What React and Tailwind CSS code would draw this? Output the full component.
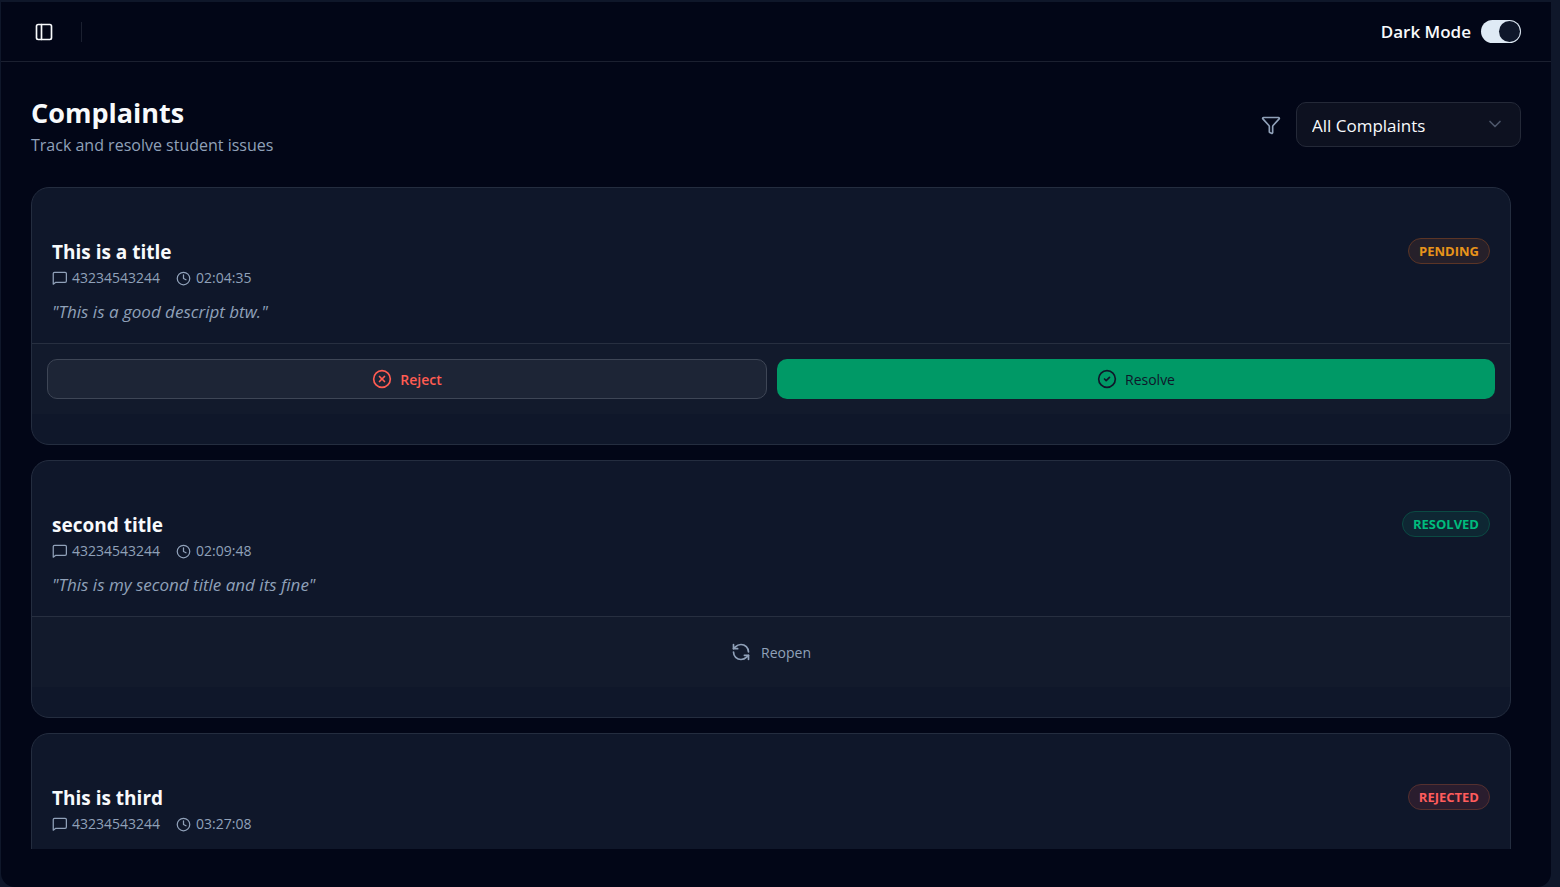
import { useState } from 'react';
import { CheckCircle2, ChevronDown, Clock, Funnel, PanelLeft, RefreshCcw, XCircle } from 'lucide-react';

const complaints = [
  { id: 1, title: 'This is a title', student: '43234543244', time: '02:04:35', description: 'This is a good descript btw.', status: 'PENDING' },
  { id: 2, title: 'second title', student: '43234543244', time: '02:09:48', description: 'This is my second title and its fine', status: 'RESOLVED' },
  { id: 3, title: 'This is third', student: '43234543244', time: '03:27:08', status: 'REJECTED' },
];

const badgeStyles = {
  PENDING: 'border-[#5b3526] bg-[#26202a] text-[#e8941a]',
  RESOLVED: 'border-[#0b4a43] bg-[#0e2733] text-[#00bc7d]',
  REJECTED: 'border-[#55302f] bg-[#2a1d2e] text-[#ff5c5c]',
};

const MessageIcon = () => (
  <svg className="size-[15px]" viewBox="0 0 24 24" fill="none" stroke="currentColor" strokeWidth={2} strokeLinecap="round" strokeLinejoin="round">
    <path d="M23 16a2 2 0 0 1-2 2H6l-4 3V4a2 2 0 0 1 2-2h17a2 2 0 0 1 2 2z" />
  </svg>
);

const ComplaintCard = ({ complaint }) => {
  const { title, student, time, description, status } = complaint;

  return (
    <article className="shrink-0 overflow-hidden rounded-[18px] border border-[#242d3f] bg-[#0f172a] pt-[50px] pb-[30px]">
      <div className="flex items-start justify-between px-5 pb-[18px]">
        <div>
          <h2 className="text-[19px] leading-7 font-bold text-slate-50">{title}</h2>
          <div className="mt-[2px] flex items-center gap-4 text-[14px] leading-5 text-[#90a1b9]">
            <span className="flex items-center gap-[5px]">
              <MessageIcon />
              {student}
            </span>
            <span className="flex items-center gap-[5px]">
              <Clock className="size-[15px]" />
              {time}
            </span>
          </div>
          {description && (
            <p className="mt-[10px] text-[17px] leading-[27px] text-[#90a1b9] italic">"{description}"</p>
          )}
        </div>
        <span className={`rounded-full border px-[10px] text-[13px] leading-6 font-bold ${badgeStyles[status]}`}>
          {status}
        </span>
      </div>

      <div className="border-t border-[#272f40] bg-[#121a2c] p-[15px]">
        {status === 'PENDING' ? (
          <div className="flex gap-[10px] text-[14px]">
            <button type="button" className="flex h-10 flex-1 items-center justify-center gap-2 rounded-[10px] border border-[#3e4656] bg-[#1d2536] font-semibold text-[#ff5c52]">
              <XCircle className="size-5" />
              Reject
            </button>
            <button type="button" className="flex h-10 flex-1 items-center justify-center gap-2 rounded-[10px] bg-[#009966] font-medium text-[#0f172a]">
              <CheckCircle2 className="size-5" />
              Resolve
            </button>
          </div>
        ) : (
          <button type="button" className="flex h-10 w-full items-center justify-center gap-[10px] rounded-[10px] text-[14px] font-medium text-[#90a1b9]">
            <RefreshCcw className="size-5" />
            Reopen
          </button>
        )}
      </div>
    </article>
  );
};

const App = () => {
  const [dark, setDark] = useState(true);

  return (
    <div className="h-screen bg-[#0f172a] pt-[2px] pr-[9px] pl-px font-['Open_Sans','Noto_Sans',sans-serif] text-slate-50">
      <div className="flex h-full flex-col overflow-hidden rounded-b-[14px] bg-[#020617]">
        <header className="flex h-[60px] shrink-0 items-center justify-between border-b border-[#1b2030] pr-[30px] pl-[33px]">
          <div className="flex items-center gap-[27px]">
            <button type="button" aria-label="Toggle sidebar">
              <PanelLeft className="size-5" />
            </button>
            <div className="h-5 w-px bg-[#1b2030]" />
          </div>
          <label className="flex items-center gap-[10px] text-[17px] leading-6 font-semibold">
            Dark Mode
            <input type="checkbox" role="switch" checked={dark} onChange={() => setDark(!dark)} className="peer sr-only" />
            <span className="flex h-[23px] w-10 items-center rounded-full bg-[#45556c] p-px peer-checked:justify-end peer-checked:bg-[#dfeaf5]">
              <span className="size-[21px] rounded-full bg-[#0f172a]" />
            </span>
          </label>
        </header>

        <main className="flex min-h-0 flex-1 flex-col px-[30px] pt-[29px] pb-[38px]">
          <div className="mb-[29px] flex items-center justify-between">
            <div className="pt-[2px]">
              <h1 className="text-[27px] leading-10 font-bold">Complaints</h1>
              <p className="text-[16px] leading-[25px] text-[#90a1b9]">Track and resolve student issues</p>
            </div>
            <div className="flex items-center gap-[15px]">
              <Funnel className="size-5 text-[#90a1b9]" />
              <div className="relative">
                <select aria-label="Filter complaints" className="h-[45px] w-[225px] appearance-none rounded-[10px] border border-[#242938] bg-[#0d1120] px-[15px] pt-[2px] text-[17px]">
                  <option>All Complaints</option>
                  <option>Pending</option>
                  <option>Resolved</option>
                  <option>Rejected</option>
                </select>
                <ChevronDown className="pointer-events-none absolute top-3 right-4 size-5 text-[#4c566a]" />
              </div>
            </div>
          </div>

          <div className="flex min-h-0 flex-1 flex-col gap-[15px] overflow-y-auto pr-[10px] [scrollbar-width:none]">
            {complaints.map((complaint) => (
              <ComplaintCard key={complaint.id} complaint={complaint} />
            ))}
          </div>
        </main>
      </div>
    </div>
  );
};

export default App;
